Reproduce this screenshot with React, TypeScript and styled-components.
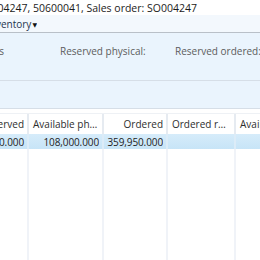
import styled, { createGlobalStyle } from "styled-components";

const GlobalStyle = createGlobalStyle`
  *, *::before, *::after {
    box-sizing: border-box;
  }
  html, body {
    margin: 0;
    padding: 0;
    background: #ffffff;
    overflow: hidden;
  }
  body {
    font-family: "Open Sans", "Noto Sans", "DejaVu Sans", sans-serif;
  }
`;

const columns = [
  { title: "Reserved", value: "0.000", width: 29 },
  { title: "Available physical", value: "108,000.000", width: 75 },
  { title: "Ordered", value: "359,950.000", width: 64 },
  { title: "Ordered reserved", value: "", width: 68 },
  { title: "Available ordered", value: "", width: 60 },
];

const template = columns.map((c) => `${c.width}px`).join(" ");

const Window = styled.div`
  width: 260px;
  height: 260px;
  overflow: hidden;
  display: flex;
  flex-direction: column;
  font-size: 10px;
`;

const TitleBar = styled.div`
  height: 15px;
  flex-shrink: 0;
  display: flex;
  justify-content: flex-end;
  align-items: center;
  padding-right: 63px;
  padding-top: 1px;
  overflow: hidden;
  white-space: nowrap;
  color: #1b1b1b;
  font-size: 10.5px;
`;

const ActionPane = styled.div`
  height: 18px;
  flex-shrink: 0;
  display: flex;
  align-items: center;
  padding-top: 1px;
  background: #f3f8fd;
  border-bottom: 1px solid #b9c0c8;
  box-shadow: 0 1px 1px rgba(160, 170, 182, 0.45);
`;

const MenuSlot = styled.div`
  width: 37px;
  display: flex;
  justify-content: flex-end;
  overflow: hidden;
  white-space: nowrap;
`;

const MenuButton = styled.span`
  color: #1f3550;
  font-size: 10px;
  display: flex;
  align-items: center;
  gap: 1px;
`;

const Caret = styled.span`
  font-size: 6px;
  color: #111;
  margin-top: 1px;
`;

const FieldPane = styled.div<{ $height: number }>`
  height: ${(p) => p.$height}px;
  flex-shrink: 0;
  background: #eaf4fd;
  border-bottom: 1px solid #d6dee7;
  display: grid;
  grid-template-columns: 60px 115px 115px;
  align-content: start;
  padding-top: 11px;
`;

const Field = styled.div<{ $clip?: boolean }>`
  display: flex;
  justify-content: ${(p) => (p.$clip ? "flex-end" : "flex-start")};
  padding-right: ${(p) => (p.$clip ? "56px" : "0")};
  overflow: hidden;
  white-space: nowrap;
  color: #5c5c5c;
  font-size: 10px;
`;

const Grid = styled.div`
  flex: 1;
  display: flex;
  flex-direction: column;
  margin-top: 4px;
  border-top: 1px solid #eef1f5;
`;

const HeaderRow = styled.div`
  display: grid;
  grid-template-columns: ${template};
  height: 20px;
  background: #ffffff;
`;

const DataRow = styled.div`
  display: grid;
  grid-template-columns: ${template};
  height: 15px;
  background: linear-gradient(#d6ecfa, #c7e4f7);
`;

const BodyRow = styled.div`
  flex: 1;
  display: grid;
  grid-template-columns: ${template};
`;

const Cell = styled.div<{ $kind: "head" | "data" | "body" }>`
  display: flex;
  align-items: center;
  justify-content: flex-end;
  padding: 0 3px 0 1px;
  overflow: hidden;
  white-space: nowrap;
  border-right: 2px solid
    ${(p) =>
      p.$kind === "head" ? "#e6ebf1" : p.$kind === "data" ? "#dcecf8" : "#f0f3f8"};
  color: ${(p) => (p.$kind === "head" ? "#2d2d2d" : "#1c1c1c")};
  font-size: 10px;
  &:last-child {
    border-right: none;
  }
`;

const CellText = styled.span<{ $clip?: boolean }>`
  overflow: ${(p) => (p.$clip ? "visible" : "hidden")};
  text-overflow: ellipsis;
  flex-shrink: ${(p) => (p.$clip ? 0 : 1)};
  min-width: 0;
  padding-left: ${(p) => (p.$clip ? "0" : "3px")};
`;

const NumberText = styled(CellText)`
  padding-left: 0;
  letter-spacing: -0.1px;
`;

export default function App() {
  return (
    <>
      <GlobalStyle />
      <Window>
        <TitleBar>Reservation - SO004247, 50600041, Sales order: SO004247</TitleBar>
        <ActionPane>
          <MenuSlot>
            <MenuButton>
              Inventory<Caret>▼</Caret>
            </MenuButton>
          </MenuSlot>
        </ActionPane>
        <FieldPane $height={48}>
          <Field $clip>Items</Field>
          <Field>Reserved physical:</Field>
          <Field>Reserved ordered:</Field>
        </FieldPane>
        <FieldPane $height={28} />
        <Grid>
          <HeaderRow>
            {columns.map((c, i) => (
              <Cell key={c.title} $kind="head">
                <CellText $clip={i === 0}>{c.title}</CellText>
              </Cell>
            ))}
          </HeaderRow>
          <DataRow>
            {columns.map((c, i) => (
              <Cell key={c.title} $kind="data">
                <NumberText $clip={i === 0}>{c.value}</NumberText>
              </Cell>
            ))}
          </DataRow>
          <BodyRow>
            {columns.map((c) => (
              <Cell key={c.title} $kind="body" />
            ))}
          </BodyRow>
        </Grid>
      </Window>
    </>
  );
}
